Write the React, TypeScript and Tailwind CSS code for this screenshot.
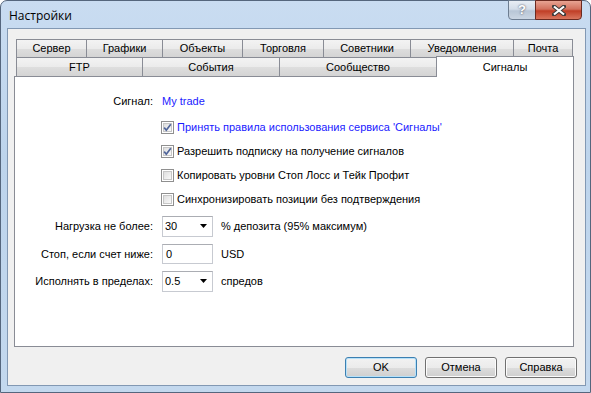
import React from "react"

const font = { fontFamily: '"Liberation Sans", Arial, sans-serif' }

const topTabs = [
  { label: "Сервер", w: "w-[71px]" },
  { label: "Графики", w: "w-[77px]" },
  { label: "Объекты", w: "w-[81px]" },
  { label: "Торговля", w: "w-[82px]" },
  { label: "Советники", w: "w-[88px]" },
  { label: "Уведомления", w: "w-[104px]" },
  { label: "Почта", w: "w-[60px]" },
]

const bottomTabs = [
  { label: "FTP", w: "w-[127px]" },
  { label: "События", w: "w-[138px]" },
  { label: "Сообщество", w: "w-[158px]" },
]

function CheckBox({ checked }: { checked: boolean }) {
  return (
    <svg width="13" height="13" viewBox="0 0 13 13" className="shrink-0">
      <defs>
        <linearGradient id="cbg" x1="0" y1="0" x2="1" y2="1">
          <stop offset="0" stopColor="#dcdcdc" />
          <stop offset="1" stopColor="#fbfbfb" />
        </linearGradient>
      </defs>
      <rect x="0.5" y="0.5" width="12" height="12" fill="#fff" stroke="#8f8f8f" />
      <rect x="2.5" y="2.5" width="8" height="8" fill="url(#cbg)" stroke="#c6c6c6" />
      {checked && (
        <path d="M3.2 6.6 L5.3 9.2 L9.8 3.2" fill="none" stroke="#50659a" strokeWidth="1.7" />
      )}
    </svg>
  )
}

function Combo({ value }: { value: string }) {
  return (
    <div className="w-[51px] h-[21px] bg-white border border-[#c7cad1] border-t-[#abadb3] flex items-center justify-between pl-[2px] pr-[5px]">
      <span>{value}</span>
      <svg width="7" height="4" viewBox="0 0 7 4">
        <path d="M0 0 H7 L3.5 4 Z" fill="#000" />
      </svg>
    </div>
  )
}

function Button({ label, primary }: { label: string; primary?: boolean }) {
  return (
    <div
      className={
        "w-[72px] h-[21px] rounded-[3px] border flex items-center justify-center bg-[linear-gradient(#f2f2f2_0%,#ebebeb_50%,#dddddd_50%,#cfcfcf_100%)] " +
        (primary
          ? "border-[#3c7fb1] shadow-[inset_0_0_0_1px_#b6e1f9]"
          : "border-[#707070] shadow-[inset_0_0_0_1px_#fcfcfc]")
      }
    >
      {label}
    </div>
  )
}

export default function App() {
  return (
    <div className="w-[591px] h-[393px] bg-white" style={font}>
      <div className="w-[591px] h-[393px] flex flex-col rounded-t-[7px] border border-[#55667d] bg-[linear-gradient(#c9dcf1_0%,#bdd4ec_40%,#c3d8ee_100%)]">
        {/* title bar */}
        <div className="h-[27px] flex items-start justify-between">
          <div className="pl-[8px] pt-[6px] text-[12px] text-black" style={{ fontFamily: '"Open Sans", "Noto Sans", sans-serif' }}>
            Настройки
          </div>
          <div className="flex mr-[8px] -mt-px">
            <div className="w-[28px] h-[20px] rounded-bl-[4px] border border-[#6d7d91] bg-[linear-gradient(#e8eef5_0%,#d3dde9_45%,#b8c6d6_55%,#cbd6e3_100%)] flex items-center justify-center text-[13px] font-bold text-white [text-shadow:0_0_2px_#334]">
              ?
            </div>
            <div className="w-[47px] h-[20px] -ml-px rounded-br-[4px] border border-[#6b2a20] bg-[linear-gradient(#e8a493_0%,#d2715d_45%,#c03e26_55%,#d9765e_100%)] flex items-center justify-center">
              <svg width="14" height="11" viewBox="0 0 14 11">
                <path d="M2 1.5 L12 9.5 M12 1.5 L2 9.5" stroke="#3a3a3a" strokeWidth="4" strokeLinecap="square" />
                <path d="M2 1.5 L12 9.5 M12 1.5 L2 9.5" stroke="#fff" strokeWidth="2.2" />
              </svg>
            </div>
          </div>
        </div>

        {/* client area */}
        <div className="flex-1 ml-[6px] mr-[4px] mb-[6px] border border-[#8298b3] bg-[#f0f0f0] flex flex-col text-[11px] text-black">
          <div className="pt-[10px] pl-[6px]">
            {/* tab rows */}
            <div className="flex ml-[2px]">
              {topTabs.map((t, i) => (
                <div
                  key={t.label}
                  className={
                    t.w +
                    " h-[18px] border border-b-0 border-[#898c95] bg-[linear-gradient(#f3f3f3_0%,#ebebeb_50%,#dedede_50%,#d4d4d4_100%)] flex items-center justify-center " +
                    (i > 0 ? "-ml-px" : "")
                  }
                >
                  {t.label}
                </div>
              ))}
            </div>
            <div className="flex ml-[2px] h-[19px]">
              {bottomTabs.map((t, i) => (
                <div
                  key={t.label}
                  className={
                    t.w +
                    " h-[19px] border border-b-0 border-[#898c95] bg-[linear-gradient(#f3f3f3_0%,#ebebeb_50%,#dedede_50%,#d4d4d4_100%)] flex items-center justify-center " +
                    (i > 0 ? "-ml-px" : "")
                  }
                >
                  {t.label}
                </div>
              ))}
              <div className="relative z-10 -top-px -ml-px w-[138px] h-[21px] border border-b-0 border-[#898c95] bg-white flex items-start justify-center pt-[2px]">
                Сигналы
              </div>
            </div>

            {/* panel */}
            <div className="w-[560px] h-[271px] border border-[#898c95] bg-white pt-[14px]">
              <div className="flex items-center h-[20px]">
                <div className="w-[138px] text-right">Сигнал:</div>
                <div className="ml-[9px] text-[#1a1aff]">My trade</div>
              </div>

              <div className="mt-[4px] pl-[146px]">
                <div className="flex items-center h-[24px] gap-[3px]">
                  <CheckBox checked />
                  <span className="text-[#1a1aff]">Принять правила использования сервиса 'Сигналы'</span>
                </div>
                <div className="flex items-center h-[24px] gap-[3px]">
                  <CheckBox checked />
                  <span>Разрешить подписку на получение сигналов</span>
                </div>
                <div className="flex items-center h-[24px] gap-[3px]">
                  <CheckBox checked={false} />
                  <span>Копировать уровни Стоп Лосс и Тейк Профит</span>
                </div>
                <div className="flex items-center h-[24px] gap-[3px]">
                  <CheckBox checked={false} />
                  <span>Синхронизировать позиции без подтверждения</span>
                </div>
              </div>

              <div className="mt-[4px] flex items-center h-[22px]">
                <div className="w-[138px] text-right">Нагрузка не более:</div>
                <div className="ml-[9px]">
                  <Combo value="30" />
                </div>
                <div className="ml-[8px]">% депозита (95% максимум)</div>
              </div>
              <div className="mt-[6px] flex items-center h-[22px]">
                <div className="w-[138px] text-right">Стоп, если счет ниже:</div>
                <div className="ml-[9px] w-[51px] h-[20px] bg-white border border-[#c7cad1] border-t-[#abadb3] flex items-center pl-[3px]">
                  0
                </div>
                <div className="ml-[8px]">USD</div>
              </div>
              <div className="mt-[5px] flex items-center h-[22px]">
                <div className="w-[138px] text-right">Исполнять в пределах:</div>
                <div className="ml-[9px]">
                  <Combo value="0.5" />
                </div>
                <div className="ml-[8px]">спредов</div>
              </div>
            </div>
          </div>

          {/* buttons */}
          <div className="flex justify-end gap-[8px] pr-[8px] mt-[10px] text-[11px]">
            <Button label="OK" primary />
            <Button label="Отмена" />
            <Button label="Справка" />
          </div>
        </div>
      </div>
    </div>
  )
}
